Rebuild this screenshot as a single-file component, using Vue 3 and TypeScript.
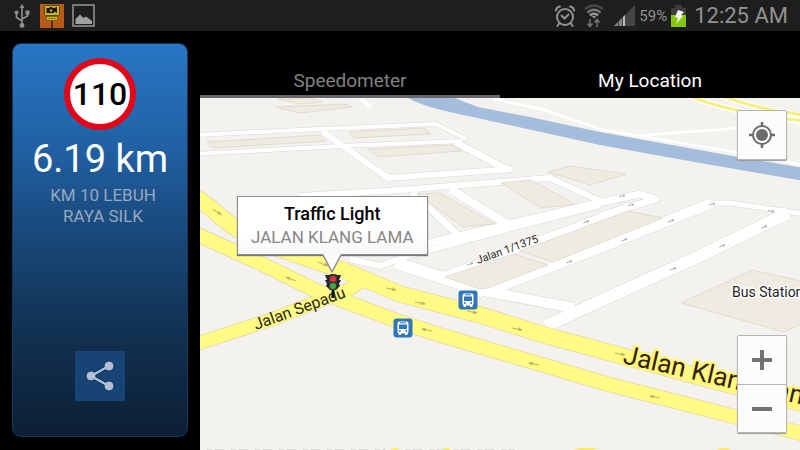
<script setup lang="ts">
import { ref } from 'vue'

type Tab = 'speed' | 'location'

interface Arrow {
  x: number
  y: number
  angle: number
}

const tabs: { id: Tab; label: string }[] = [
  { id: 'speed', label: 'Speedometer' },
  { id: 'location', label: 'My Location' },
]
const active = ref<Tab>('location')

const upperRoad = 'M196 197 L212 209 Q236 232 268 245 L345 271 L400 294 L480 315 L548 336 L600 350 L700 377 L804 404'
const lowerRoad = 'M196 234 L260 263 L315 290 L400 322 L440 335 L550 367 L600 382 L740 418 L804 434'
const sideRoad = 'M196 344 L270 320 L350 289 L364 279'

const streets: { d: string; w: number }[] = [
  { d: 'M196 135 L320 129 L436 124 L466 139', w: 4 },
  { d: 'M196 154 L340 146 L462 141', w: 4 },
  { d: 'M455 142 L508 170', w: 7 },
  { d: 'M322 131 L388 178 L512 169', w: 6 },
  { d: 'M300 196 L400 190 L550 178 L600 201', w: 6 },
  { d: 'M412 192 L458 235', w: 7 },
  { d: 'M450 189 L507 224', w: 8 },
  { d: 'M400 250 L500 226 L598 203 L640 194 L656 199 L600 216', w: 7 },
  { d: 'M350 259 L380 266 L404 257 L500 231 L600 205', w: 6 },
  { d: 'M396 263 L440 277 L484 292', w: 12 },
  { d: 'M440 277 L476 264 L600 218 L630 206', w: 8 },
  { d: 'M484 293 L600 248 L712 203', w: 10 },
  { d: 'M712 203 L730 203 L804 214', w: 5 },
  { d: 'M788 213 L700 256 L600 301 L546 326', w: 12 },
  { d: 'M484 291 L574 308', w: 10 },
]

const buildings: string[] = [
  '278,99 310,98 322,102 300,104',
  '275,107 345,104 352,107 300,113',
  '207,142 320,135 326,141 213,148',
  '349,132 423,128 431,134 354,138',
  '368,149 453,145 462,151 379,157',
  '501,183 531,180 575,204 541,208',
  '548,172 570,166 626,174 590,185',
  '417,194 440,193 495,224 463,227',
  '445,277 513,254 548,265 488,288 480,289',
  '520,251 628,211 663,218 553,262',
  '681,303 752,270 810,283 810,320 784,332',
]

const streetArrows: Arrow[] = [
  { x: 470, y: 264, angle: -20 },
  { x: 586, y: 222, angle: -20 },
  { x: 569, y: 262, angle: -20 },
  { x: 624, y: 240, angle: -20 },
  { x: 671, y: 221, angle: -20 },
  { x: 673, y: 269, angle: -20 },
  { x: 722, y: 246, angle: -20 },
  { x: 764, y: 227, angle: -20 },
  { x: 712, y: 204, angle: -10 },
  { x: 771, y: 211, angle: 8 },
  { x: 622, y: 196, angle: -10 },
  { x: 631, y: 205, angle: -10 },
]

const roadArrows: Arrow[] = [
  { x: 217, y: 212, angle: 32 },
  { x: 323, y: 264, angle: 20 },
  { x: 391, y: 289, angle: 12 },
  { x: 420, y: 303, angle: 10 },
  { x: 472, y: 312, angle: 12 },
  { x: 517, y: 329, angle: 12 },
  { x: 620, y: 354, angle: 12 },
  { x: 291, y: 279, angle: 200 },
  { x: 427, y: 330, angle: 192 },
  { x: 534, y: 364, angle: 192 },
  { x: 655, y: 397, angle: 192 },
]

const stops = [
  { x: 468, y: 300 },
  { x: 403, y: 328 },
]
</script>

<template>
  <div class="screen">
    <header class="status">
      <div class="status-group">
        <svg class="usb" viewBox="0 0 16 26" width="16" height="26" aria-hidden="true">
          <g fill="none" stroke="#8f8f8f" stroke-width="1.6">
            <path d="M8 4 V22 M8 18 L2.500 14.500 V11 M8 16 L13.500 13 V10" />
          </g>
          <path d="M8 1 L10.500 5 H5.500Z" fill="#8f8f8f" />
          <circle cx="8" cy="22.500" r="2.400" fill="#8f8f8f" />
          <circle cx="2.500" cy="9.500" r="2" fill="#8f8f8f" />
          <rect x="11.500" y="7.500" width="4" height="4" fill="#8f8f8f" />
        </svg>
        <svg viewBox="0 0 24 24" width="24" height="24" aria-hidden="true">
          <rect width="24" height="24" fill="#b95a18" />
          <rect x="4.500" y="1.500" width="15" height="10" rx="1" fill="#c9b51c" stroke="#3e3210" stroke-width=".8" />
          <path d="M6.500 4 h3 v-1 h3 v1 h1.500 l3 -1 v6 l-3 -1.500 v1.500 h-7.500z" fill="#17160d" />
          <circle cx="11" cy="6.500" r="1.300" fill="#c9b51c" />
          <rect x="6.500" y="12.500" width="11" height="4" fill="#c9b51c" stroke="#5a4510" stroke-width=".6" />
          <path d="M8.500 14.500 h7" stroke="#6e5a12" stroke-dasharray="2 1" />
          <path d="M12 17 V24" stroke="#17160d" stroke-width="1.300" />
        </svg>
        <svg viewBox="0 0 23 23" width="23" height="23" aria-hidden="true">
          <rect x="1" y="1" width="21" height="21" fill="none" stroke="#8f8f8f" stroke-width="1.600" />
          <path d="M3.500 20 V15 L8 10.500 L11.500 14 L14 12.500 L20 17 V20Z" fill="#a0a0a0" />
        </svg>
      </div>
      <div class="status-group status-right">
        <svg viewBox="0 0 22 24" width="22" height="24" aria-hidden="true">
          <g fill="none" stroke="#929292" stroke-width="2" stroke-linecap="round">
            <circle cx="11" cy="13" r="8" />
            <path d="M1.800 6.500 Q2.500 3 6 2.500 M20.200 6.500 Q19.500 3 16 2.500 M5 19.500 L3.500 22 M17 19.500 L18.500 22" />
            <path d="M7.500 11.500 L10.500 14.500 L14.500 10.500" />
          </g>
        </svg>
        <svg viewBox="0 0 20 24" width="20" height="24" aria-hidden="true">
          <g fill="none" stroke-width="2.500">
            <path d="M1 5 Q10 -2 19 5" stroke="#474747" />
            <path d="M3.500 8.500 Q10 3 16.500 8.500" stroke="#777" />
            <path d="M6 11.500 Q10 8 14 11.500" stroke="#999" />
          </g>
          <path d="M8 12.500 Q10 11 12 12.500 L10 14.500Z" fill="#999" />
          <path d="M6 15 V22 M3.500 19.500 L6 22.500 L8.500 19.500 M13 23 V16 M10.500 18.500 L13 15.500 L15.500 18.500" fill="none" stroke="#737373" stroke-width="1.500" />
        </svg>
        <svg class="signal" viewBox="0 0 21 21" width="21" height="21" aria-hidden="true">
          <path d="M21 0 V21 H0Z" fill="#454545" />
          <path d="M0 21 L4 17 V21Z M5 16 L8 13 V21 H5Z" fill="#858585" />
          <path d="M9 12 L11 10 V21 H9Z" fill="#bdbdbd" />
        </svg>
        <span class="percent">59%</span>
        <svg class="battery" viewBox="0 0 15 22" width="15" height="22" aria-hidden="true">
          <path d="M4 0 H11 V3 H15 V11 H0 V3 H4Z" fill="#3c3c3c" />
          <rect y="10" width="15" height="12" fill="#85c80a" />
          <path d="M7 5 L13 7 L10 10 L12 11 L5 19 L7 13 L4 12Z" fill="#f4f4f4" />
        </svg>
        <time class="clock">12:25 AM</time>
      </div>
    </header>

    <div class="body">
      <aside class="side">
        <section class="panel">
          <div class="limit">110</div>
          <p class="distance">6.19 km</p>
          <p class="place">KM 10 LEBUH RAYA SILK</p>
          <button class="share" type="button" aria-label="Share">
            <svg viewBox="0 0 30 32" width="30" height="32" aria-hidden="true">
              <path d="M24 6 L6 16 L24 26" fill="none" stroke="#0c2c50" stroke-width="4" />
              <g fill="#b0bfd6" stroke="#0c2c50" stroke-width="1">
                <circle cx="24" cy="6" r="5" />
                <circle cx="6" cy="16" r="5" />
                <circle cx="24" cy="26" r="5" />
              </g>
              <path d="M24 6 L6 16 L24 26" fill="none" stroke="#b0bfd6" stroke-width="2.500" />
            </svg>
          </button>
        </section>
      </aside>

      <main class="main">
        <nav class="tabs" role="tablist">
          <button
            v-for="tab in tabs"
            :key="tab.id"
            class="tab"
            :class="{ on: active === tab.id }"
            type="button"
            role="tab"
            :aria-selected="active === tab.id"
            @click="active = tab.id"
          >
            {{ tab.label }}
          </button>
        </nav>

        <div class="map">
          <svg class="tiles" viewBox="200 98 600 352" preserveAspectRatio="xMidYMid slice" role="img" aria-label="Map">
            <rect x="200" y="98" width="600" height="352" fill="#f3f2ee" />
            <path d="M406 97 Q420 105 445 111 L500 123 L600 145 L700 163 L804 181 V168 L738 157 L600 132 L530 117 L478 107 L452 97Z" fill="#a4bddd" />
            <g fill="none" stroke="#fff" stroke-width="2.500">
              <path d="M494 99 L545 110 L600 129 L640 136 L740 153 L804 165" />
              <path d="M632 136 L740 128" />
              <path d="M360 98 L371 107" stroke-width="4" />
            </g>
            <g fill="none" stroke="#fff" stroke-width="6">
              <path d="M688 95 Q725 112 804 122 M720 95 Q755 109 804 116" />
            </g>
            <g fill="none" stroke="#f7ef7b" stroke-width="3">
              <path d="M688 95 Q725 112 804 121 M720 95 Q755 109 804 115" />
            </g>

            <g fill="none" stroke="#d9d8d4" stroke-linejoin="round">
              <path v-for="s in streets" :key="s.d" :d="s.d" :stroke-width="s.w + 1" />
            </g>
            <g fill="none" stroke="#fff" stroke-linejoin="round">
              <path v-for="s in streets" :key="s.d" :d="s.d" :stroke-width="s.w" />
            </g>
            <g fill="#efebe1" stroke="#dad4c5" stroke-width=".7">
              <polygon v-for="b in buildings" :key="b" :points="b" />
            </g>

            <g fill="none" stroke="#ddc89a">
              <path :d="upperRoad" stroke-width="17" />
              <path :d="lowerRoad" stroke-width="15" />
              <path :d="sideRoad" stroke-width="14" />
            </g>
            <g fill="none" stroke="#fffb85">
              <path :d="upperRoad" stroke-width="16" />
              <path :d="lowerRoad" stroke-width="14" />
              <path :d="sideRoad" stroke-width="13" />
            </g>
            <g fill="#fbed62">
              <path d="M390 450 L394 448 H400 L397 450Z M441 450 L443 448 H449 L450 450Z M574 450 L580 448 H599 L592 450Z M716 450 Q724 446 732 450Z" />
            </g>
            <path d="M207 449.500 H385 M405 449.500 H515" stroke="#dddcd8" stroke-dasharray="5 3 9 7" />

            <g fill="none" stroke="#a7b0bc" stroke-width=".9">
              <path
                v-for="a in streetArrows"
                :key="`${a.x}-${a.y}`"
                d="M-3 0 H3 M1 -1 L3 0 L1 1"
                :transform="`translate(${a.x} ${a.y}) rotate(${a.angle})`"
              />
            </g>
            <g fill="none" stroke="#b5ae62" stroke-width=".9">
              <path
                v-for="a in roadArrows"
                :key="`${a.x}-${a.y}`"
                d="M-5 0 H5 M1 -1.500 L5 0 L1 1"
                :transform="`translate(${a.x} ${a.y}) rotate(${a.angle})`"
              />
            </g>

            <text class="street" font-size="16" transform="translate(256 330) rotate(-20)">Jalan Sepadu</text>
            <text class="street" font-size="11" transform="translate(478 264) rotate(-20)">Jalan 1/1375</text>
            <text class="road" font-size="26" transform="translate(622 363) rotate(13)">Jalan Klang Lama</text>
            <text class="poi" font-size="14" x="732" y="297">Bus Station</text>

            <g v-for="s in stops" :key="s.x" :transform="`translate(${s.x} ${s.y})`">
              <rect x="-9.500" y="-9.500" width="19" height="19" rx="3" fill="#2f77b8" />
              <rect x="-5.500" y="-6.500" width="11" height="12" rx="2" fill="#fff" />
              <rect x="-4" y="-3.500" width="8" height="4.500" fill="#2f77b8" />
              <path d="M-3 -5.200 H3" stroke="#2f77b8" />
              <circle cx="-3.200" cy="3" r="1" fill="#2f77b8" />
              <circle cx="3.200" cy="3" r="1" fill="#2f77b8" />
              <path d="M-4.500 5 h2.500 v2 h-2.500z M2 5 h2.500 v2 h-2.500z" fill="#fff" />
            </g>

            <g transform="translate(333 274)">
              <path d="M-1.500 15 H1.500 V24 H-1.500Z" fill="#111" />
              <path d="M-8 1 H8 L6 6 H8 L6 10 L7 12 L3 16 H-3 L-7 12 L-6 10 L-8 6 H-6Z" fill="#26272b" />
              <rect x="-4" y="0" width="8" height="16" rx="2" fill="#36373b" />
              <circle cy="5" r="3" fill="#e0303a" />
              <circle cy="12" r="3" fill="#49a64a" />
            </g>
          </svg>

          <div class="callout">
            <strong class="callout-title">Traffic Light</strong>
            <span class="callout-text">JALAN KLANG LAMA</span>
            <svg class="callout-tip" viewBox="0 0 20 20" width="20" height="20" aria-hidden="true">
              <path d="M1 0 H19 L10 18Z" fill="#fafafa" />
              <path d="M1 1 L10 18 L19 1" fill="none" stroke="#8d8d8d" stroke-width="1.500" />
            </svg>
          </div>

          <button class="control locate" type="button" aria-label="Centre on my location">
            <svg viewBox="0 0 26 26" width="26" height="26" aria-hidden="true">
              <circle cx="13" cy="13" r="9" fill="none" stroke="#6b6b6b" stroke-width="2" />
              <circle cx="13" cy="13" r="6" fill="#6b6b6b" />
              <path d="M13 0 V5 M13 21 V26 M0 13 H5 M21 13 H26" stroke="#6b6b6b" stroke-width="2.500" />
            </svg>
          </button>
          <div class="zoom">
            <button class="control" type="button" aria-label="Zoom in">
              <svg viewBox="0 0 22 22" width="22" height="22" aria-hidden="true">
                <path d="M11 1 V21 M1 11 H21" stroke="#737373" stroke-width="4" />
              </svg>
            </button>
            <button class="control" type="button" aria-label="Zoom out">
              <svg viewBox="0 0 22 22" width="22" height="22" aria-hidden="true">
                <path d="M1 11 H21" stroke="#737373" stroke-width="4" />
              </svg>
            </button>
          </div>
        </div>
      </main>
    </div>
  </div>
</template>

<style>
body {
  background: #000;
}
</style>

<style scoped>
.screen {
  display: flex;
  flex-direction: column;
  min-height: 100vh;
  background: #000;
  font-family: Roboto, "Liberation Sans", sans-serif;
}

button {
  margin: 0;
  padding: 0;
  border: 0;
  font: inherit;
  cursor: pointer;
}

svg {
  display: block;
  flex: none;
}

.status {
  display: flex;
  justify-content: space-between;
  align-items: center;
  height: 31px;
  padding: 0 12px 0 14px;
  background: #1e1e1e;
  color: #929292;
}

.status-group {
  display: flex;
  align-items: center;
  gap: 8px;
}

.usb {
  margin-right: 2px;
}

.signal {
  margin-left: 2px;
}

.percent {
  margin-left: -4px;
  font-size: 15px;
}

.battery {
  margin-left: -4px;
}

.clock {
  font-size: 22px;
  line-height: 31px;
}

.body {
  display: grid;
  grid-template-columns: 200px 1fr;
  flex: 1;
}

.side {
  display: flex;
  padding: 12px 12px 13px;
}

.panel {
  display: flex;
  flex: 1;
  flex-direction: column;
  align-items: center;
  padding: 14px 12px 35px;
  border: 1px solid #16365a;
  border-radius: 9px;
  background: linear-gradient(#2876c4, #2161a4 26%, #184778 50%, #11304f 75%, #0d1f35);
  box-sizing: border-box;
}

.limit {
  width: 60px;
  height: 60px;
  border: 6px solid #e2061b;
  border-radius: 50%;
  background: #fff;
  color: #000;
  font-size: 32px;
  font-weight: 500;
  line-height: 60px;
  text-align: center;
}

.distance {
  margin: 7px 0 0;
  color: #fff;
  font-size: 38px;
  line-height: 44px;
  white-space: nowrap;
}

.place {
  max-width: 120px;
  margin: 4px 0 0;
  padding-left: 6px;
  color: #98a8bc;
  font-size: 17px;
  line-height: 21px;
  text-align: center;
}

.share {
  display: grid;
  place-items: center;
  width: 50px;
  height: 50px;
  margin-top: auto;
  background: #174474;
}

.main {
  display: flex;
  flex-direction: column;
  min-width: 0;
}

.tabs {
  display: flex;
  height: 67px;
}

.tab {
  flex: 1;
  padding-top: 36px;
  border-bottom: 3px solid #68666a;
  background: none;
  color: #818181;
  font-size: 19px;
  line-height: 28px;
}

.tab.on {
  border-bottom-color: #000;
  color: #fff;
}

.map {
  position: relative;
  flex: 1;
  min-height: 352px;
  overflow: hidden;
}

.tiles {
  position: absolute;
  inset: 0;
  width: 100%;
  height: 100%;
}

.street {
  fill: #2a2718;
}

.road {
  fill: #35200e;
  stroke: #fff67c;
  stroke-width: 5px;
  stroke-linejoin: round;
  paint-order: stroke;
}

.poi {
  fill: #222;
  stroke: #fff;
  stroke-width: 3px;
  paint-order: stroke;
}

.callout {
  position: absolute;
  top: 98px;
  left: 37px;
  display: flex;
  flex-direction: column;
  align-items: center;
  padding: 5px 13px;
  border: 1px solid #8d8d8d;
  background: linear-gradient(#fff 60%, #f7f7f7);
  box-shadow: 0 1px 1px #777;
  white-space: nowrap;
}

.callout-title {
  color: #000;
  font-size: 18px;
  font-weight: 500;
  line-height: 24px;
}

.callout-text {
  color: #868686;
  font-size: 17px;
  line-height: 23px;
}

.callout-tip {
  position: absolute;
  top: 100%;
  left: 50%;
  margin-left: -10px;
}

.control {
  display: grid;
  place-items: center;
  width: 48px;
  height: 48px;
  background: #fcfcfc;
}

.locate,
.zoom {
  position: absolute;
  right: 13px;
  border: 1px solid #b5b5b5;
  border-radius: 2px;
  box-shadow: 0 1px 1px #999;
}

.locate {
  top: 12px;
  width: 50px;
  height: 50px;
}

.zoom {
  bottom: 17px;
}

.zoom .control + .control {
  border-top: 1px solid #b5b5b5;
}
</style>
